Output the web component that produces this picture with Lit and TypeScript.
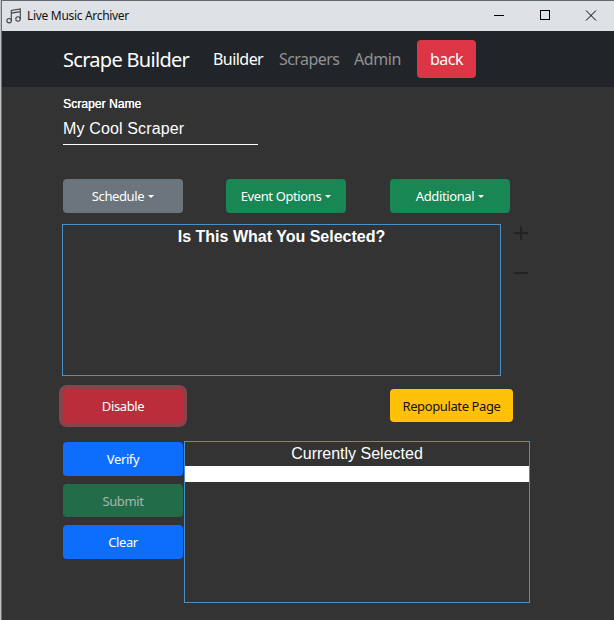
import { LitElement, html, css, svg } from "lit";
import { customElement, property } from "lit/decorators.js";

@customElement("x-button")
class XButton extends LitElement {
  @property() label = "";
  @property({ type: Boolean }) caret = false;
  static styles = css`
    :host { display: flex; align-items: center; justify-content: center; box-sizing: border-box; width: 120px; height: 34px; border-radius: 4px; color: #fff; font: 13px/19px "Noto Sans", "Open Sans", sans-serif; white-space: nowrap; letter-spacing: var(--track, -0.38px); padding-top: 1px; }
    .caret { margin-left: 4px; border: 3px solid transparent; border-top-color: currentColor; border-bottom: 0; }
  `;
  render() {
    return html`<span>${this.label}</span>${this.caret ? html`<span class="caret"></span>` : ""}`;
  }
}

@customElement("app-root")
class AppRoot extends LitElement {
  static styles = css`
    :host { display: block; width: 614px; height: 620px; overflow: hidden; background: #333; color: #fff; font-family: "Noto Sans", "Open Sans", sans-serif; }
    * { box-sizing: border-box; }
    .frame { border-left: 1px solid #bfc3c8; }
    .window { height: 620px; border-left: 1px solid #6b6e72; border-top: 1px solid #66686c; }
    .title { height: 30px; display: flex; align-items: center; background: #dee1e6; color: #111; font-size: 12px; padding-left: 4px; }
    .title .name { margin-left: 5px; letter-spacing: -0.31px; flex: 1; padding-bottom: 1px; }
    .title svg { display: block; }
    .controls { display: flex; }
    .controls svg { width: 46px; height: 30px; }
    nav { height: 56px; background: #212529; display: flex; align-items: center; padding-left: 61px; font-size: 16px; white-space: nowrap; }
    .brand { width: 150px; font-size: 20px; letter-spacing: -0.7px; }
    .link { color: #909294; letter-spacing: -0.55px; }
    .link.active { color: #fff; }
    .link.one { width: 66px; } .link.two { width: 75px; } .link.three { width: 63px; letter-spacing: -0.4px; }
    .back { width: 59px; height: 38px; line-height: 39px; border-radius: 4px; text-align: center; background: #dc3545; letter-spacing: -0.5px; }
    main { padding-left: 61px; font-family: "Liberation Sans", Arial, sans-serif; }
    .label { padding-top: 10px; font-size: 12px; line-height: 14px; height: 24px; letter-spacing: 0.08px; text-shadow: 0.3px 0 #fff; }
    .field { width: 195px; height: 34px; border-bottom: 1px solid #fff; font-size: 16px; line-height: 35px; letter-spacing: 0.14px; }
    .menus { display: flex; margin-top: 34px; }
    .menus .events { margin: 0 44px 0 43px; }
    .preview { display: flex; margin: 11px 0 0 -1px; }
    .box { border: 1px solid #4a90c4; text-align: center; font-size: 16px; }
    .selected { width: 439px; height: 152px; line-height: 24px; font-weight: 700; }
    .zoomers { margin-left: 13px; color: #222; }
    .zoomers svg { display: block; }
    .actions { display: flex; justify-content: space-between; width: 450px; margin-top: 13px; height: 53px; }
    .bottom { display: flex; gap: 1px; }
    .stack { display: flex; flex-direction: column; }
    .current { width: 346px; height: 162px; margin-top: -1px; }
    .heading { height: 24px; line-height: 24px; }
    .row { height: 16px; background: #fff; }
    .gray { background: #6c757d; }
    .green { background: #198754; }
    .danger { background: #bb2d3b; box-shadow: 0 0 0 4px rgba(225, 83, 97, 0.5); }
    .warn { background: #ffc107; color: #111; width: 123px; height: 33px; }
    .blue { background: #0d6efd; }
    .off { background: #236c4a; color: #a3b9ad; height: 33px; margin: 8px 0; }
  `;
  render() {
    return html`<div class="frame"><div class="window">
      <div class="title">
        <svg width="16" height="16" viewBox="0 0 16 16" fill="none" stroke="#444" stroke-width="1.1">
          <circle cx="3.1" cy="12.7" r="2.2" /><circle cx="12" cy="11" r="2.2" />
          <path d="M5.3 12.7V2.5L14.3 1v10M5.3 5.1l9-1.5" />
        </svg>
        <span class="name">Live Music Archiver</span>
        <div class="controls">
          ${[svg`<path d="M18 14.5h10" />`, svg`<rect x="18.5" y="9.5" width="9" height="9" />`, svg`<path d="M18 9.5l10 10M28 9.5l-10 10" />`].map(
            (g) => html`<svg viewBox="0 0 46 30" fill="none" stroke="#000" stroke-width="1">${g}</svg>`
          )}
        </div>
      </div>
      <nav>
        <span class="brand">Scrape Builder</span>
        <span class="link one active">Builder</span>
        <span class="link two">Scrapers</span>
        <span class="link three">Admin</span>
        <span class="back">back</span>
      </nav>
      <main>
        <div class="label">Scraper Name</div>
        <div class="field">My Cool Scraper</div>
        <div class="menus">
          <x-button class="gray" label="Schedule" caret></x-button>
          <x-button class="green events" label="Event Options" caret></x-button>
          <x-button class="green" label="Additional" caret></x-button>
        </div>
        <div class="preview">
          <div class="box selected">Is This What You Selected?</div>
          <div class="zoomers">
            <svg width="14" height="60" viewBox="0 0 14 60" fill="none" stroke="currentColor" stroke-width="2"><path d="M0 9h14M7 2v14M0 49h14" /></svg>
          </div>
        </div>
        <div class="actions">
          <x-button class="danger" label="Disable"></x-button>
          <x-button class="warn" label="Repopulate Page"></x-button>
        </div>
        <div class="bottom">
          <div class="stack">
            <x-button class="blue" label="Verify"></x-button>
            <x-button class="off" label="Submit"></x-button>
            <x-button class="blue" label="Clear"></x-button>
          </div>
          <div class="box current"><div class="heading">Currently Selected</div><div class="row"></div></div>
        </div>
      </main>
    </div></div>`;
  }
}
